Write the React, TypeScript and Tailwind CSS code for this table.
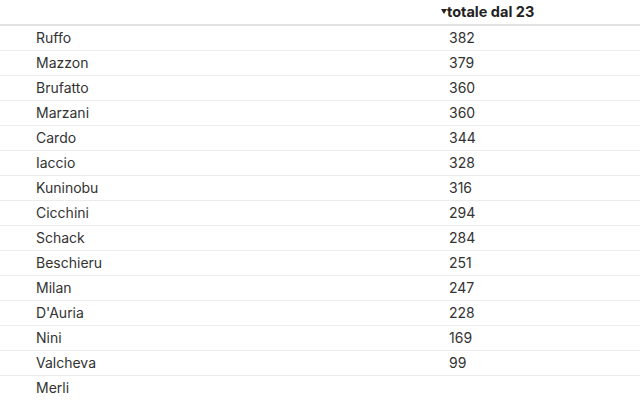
const rows: [string, number | null][] = [
  ["Ruffo", 382],
  ["Mazzon", 379],
  ["Brufatto", 360],
  ["Marzani", 360],
  ["Cardo", 344],
  ["Iaccio", 328],
  ["Kuninobu", 316],
  ["Cicchini", 294],
  ["Schack", 284],
  ["Beschieru", 251],
  ["Milan", 247],
  ["D'Auria", 228],
  ["Nini", 169],
  ["Valcheva", 99],
  ["Merli", null],
];

export default function App() {
  return (
    <div className="w-[640px] h-[400px] overflow-hidden bg-white text-[14px] text-[#333] font-['Inter','Liberation_Sans',sans-serif]">
      <div className="flex h-[26px] border-b-2 border-[#e2e2e2]">
        <div className="w-[441px]" />
        <div className="flex items-center font-bold text-[14.5px] text-[#222] pb-[1px]">
          <svg width="6" height="5" viewBox="0 0 6 5" className="mt-[-1px]">
            <path d="M0 0h6L3 5z" fill="#222" />
          </svg>
          totale dal 23
        </div>
      </div>
      {rows.map(([name, value]) => (
        <div key={name} className="flex h-[25px] items-center border-b border-[#ececec] pb-[1px]">
          <div className="w-[440px] pl-[36px]">{name}</div>
          <div className="pl-[9px]">{value ?? ""}</div>
        </div>
      ))}
    </div>
  );
}
